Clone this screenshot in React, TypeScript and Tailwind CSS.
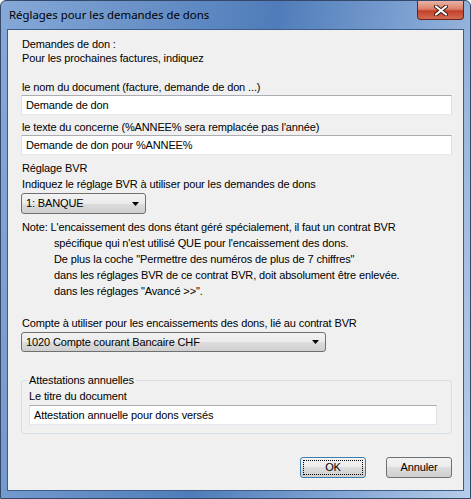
import { ReactNode } from 'react';

const Field = ({ value, className = '' }: { value: string; className?: string }) => (
  <div
    className={`h-[20px] bg-white border border-[#abadb3] border-l-[#e2e3ea] border-r-[#dbdfe6] border-b-[#e3e9ef] pl-[4px] leading-[18px] ${className}`}
  >
    {value}
  </div>
);

const Combo = ({ value, className = '' }: { value: string; className?: string }) => (
  <div
    className={`flex items-center justify-between rounded-[3px] border border-[#707070] bg-[linear-gradient(to_bottom,#f2f2f2_0%,#ebebeb_50%,#dddddd_50%,#cfcfcf_100%)] pl-[4px] pr-[6px] ${className}`}
  >
    <span>{value}</span>
    <svg width="7" height="4" viewBox="0 0 7 4">
      <path d="M0 0h7L3.5 4z" fill="#000" />
    </svg>
  </div>
);

const Button = ({ children, primary }: { children: ReactNode; primary?: boolean }) => (
  <div
    className={`w-[66px] h-[21px] rounded-[3px] border ${
      primary ? 'border-[#3c7fb1] p-[2px]' : 'border-[#707070]'
    } bg-[linear-gradient(to_bottom,#f2f2f2_0%,#ebebeb_50%,#dddddd_50%,#cfcfcf_100%)]`}
  >
    <div
      className={`h-full flex items-center justify-center ${
        primary ? 'border border-dotted border-black' : ''
      }`}
    >
      {children}
    </div>
  </div>
);

export default function App() {
  return (
    <div className="w-[471px] h-[499px] flex flex-col rounded-t-[6px] border border-[#34496a] bg-[linear-gradient(100deg,#86a9d8_0%,#6a92c8_25%,#4f7cb9_50%,#7fa3d3_75%,#b7cde8_100%)] font-['Liberation_Sans',sans-serif] text-[11px] tracking-[-0.13px] text-black">
      {/* title bar */}
      <div className="h-[28px] flex items-start justify-between">
        <div className="pl-[8px] pt-[6px] text-[11.4px] tracking-normal leading-[16px] font-['Noto_Sans',sans-serif] text-black">
          Réglages pour les demandes de dons
        </div>
        <div className="mr-[6px] w-[47px] h-[19px] rounded-b-[4px] border border-t-0 border-[#6b2419] bg-[linear-gradient(to_bottom,#e9b3a5_0%,#d9806a_45%,#c3402a_55%,#d26b52_100%)] flex items-center justify-center">
          <svg width="14" height="11" viewBox="0 0 14 11">
            <path
              d="M2 1.5L12 9.5M12 1.5L2 9.5"
              stroke="#3b1a14"
              strokeWidth="4"
              strokeLinecap="round"
            />
            <path d="M2 1.5L12 9.5M12 1.5L2 9.5" stroke="#fff" strokeWidth="2.2" strokeLinecap="round" />
          </svg>
        </div>
      </div>

      {/* client area */}
      <div className="mx-[6px] flex-1 border border-[#3e5d86] bg-[#f0f0f0] pl-[13px] pr-[11px] flex flex-col">
        <div className="mt-[7px] leading-[14px] pl-[1px]">
          <div>Demandes de don :</div>
          <div>Pour les prochaines factures, indiquez</div>
        </div>

        <div className="mt-[15px] leading-[14px] pl-[1px]">le nom du document (facture, demande de don ...)</div>
        <Field value="Demande de don" className="mt-[1px]" />

        <div className="mt-[5px] leading-[14px] pl-[1px]">le texte du concerne (%ANNEE% sera remplacée pas l'année)</div>
        <Field value="Demande de don pour  %ANNEE%" className="mt-[1px]" />

        <div className="mt-[5px] leading-[16px] pl-[1px]">
          <div>Réglage BVR</div>
          <div>Indiquez le réglage BVR à utiliser pour les demandes de dons</div>
        </div>
        <Combo value="1: BANQUE" className="mt-[1px] w-[125px] h-[21px]" />

        <div className="mt-[5px] leading-[16px] pl-[1px]">
          <div>Note: L'encaissement des dons étant géré spécialement, il faut un contrat BVR</div>
          <div className="pl-[32px]">
            <div>spécifique qui n'est utilisé QUE pour l'encaissement des dons.</div>
            <div>De plus la coche "Permettre des numéros de plus de 7 chiffres"</div>
            <div>dans les réglages BVR de ce contrat BVR, doit absolument être enlevée.</div>
            <div>dans les réglages "Avancé &gt;&gt;".</div>
          </div>
        </div>

        <div className="mt-[17px] leading-[14px] pl-[1px]">Compte à utiliser pour les encaissements des dons, lié au contrat BVR</div>
        <Combo value="1020 Compte courant Bancaire CHF" className="mt-[2px] w-[305px] h-[20px]" />

        <fieldset className="mt-[21px] w-[431px] rounded-[3px] border border-[#d5dfe5] pl-[7px] pr-[14px] pb-[8px]">
          <legend className="ml-[-2px] px-[2px] leading-[14px]">Attestations annuelles</legend>
          <div className="mt-[2px] leading-[14px]">Le titre du document</div>
          <Field value="Attestation annuelle pour dons versés" className="mt-[2px]" />
        </fieldset>

        <div className="mt-[23px] flex justify-end gap-[20px]">
          <Button primary>OK</Button>
          <Button>Annuler</Button>
        </div>
      </div>
      <div className="h-[7px]" />
    </div>
  );
}
